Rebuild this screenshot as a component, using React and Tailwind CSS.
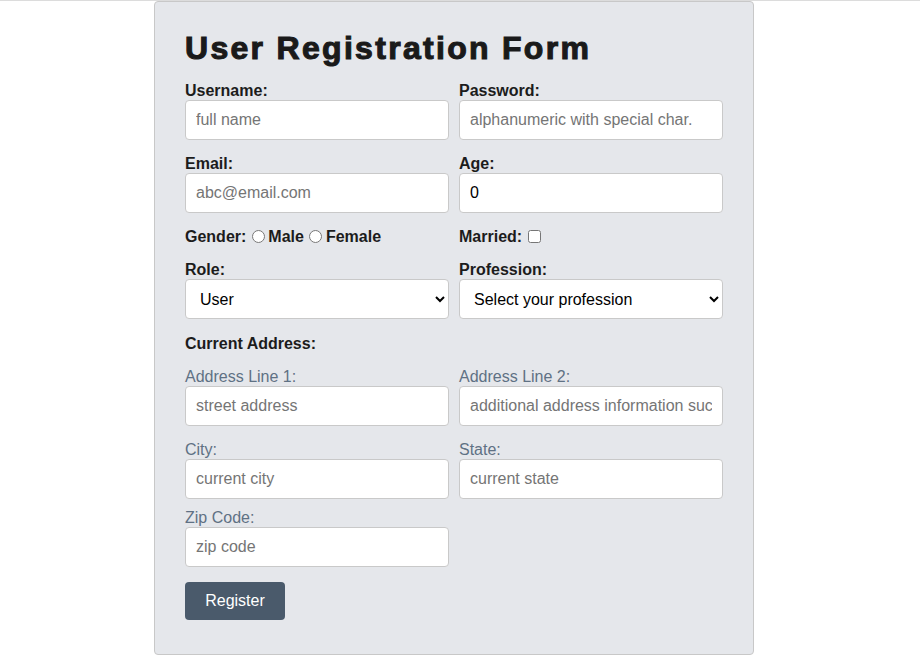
export default function App() {
  const font = { fontFamily: '"Liberation Sans", Arial, Helvetica, sans-serif' };
  const mainLabel = 'block text-[16px] leading-[19px] font-bold text-[#1c1c1c]';
  const subLabel = 'block text-[16px] leading-[19px] text-[#5f7184]';
  const input =
    'block h-10 w-full rounded-[4px] border border-[#c9c9c9] bg-white px-[10px] text-[16px] text-black placeholder:text-[#757575] outline-none';
  const select =
    'block h-10 w-full rounded-[4px] border border-[#c9c9c9] bg-white px-[10px] text-[16px] text-black outline-none';

  return (
    <div className="min-h-[663px] bg-white" style={font}>
      <div className="h-px w-full bg-[#dcdcdc]" />
      <div className="flex justify-center pr-[12px]">
        <div className="w-[600px] rounded-[4px] border border-[#c8c8c8] bg-[#e5e7eb] p-[30px]">
          <h1 className="mb-[17px] text-[32px] leading-8 font-bold tracking-[2.3px] text-[#1a1a1a] [-webkit-text-stroke:1.1px_#1a1a1a]">
            User Registration Form
          </h1>

          <form onSubmit={(e) => e.preventDefault()}>
            <div className="grid grid-cols-2 gap-x-[10px]">
              <div className="mb-[14px]">
                <label className={mainLabel}>Username:</label>
                <input type="text" placeholder="full name" className={input} />
              </div>
              <div className="mb-[14px]">
                <label className={mainLabel}>Password:</label>
                <input type="password" placeholder="alphanumeric with special char." className={input} />
              </div>

              <div className="mb-[14px]">
                <label className={mainLabel}>Email:</label>
                <input type="email" placeholder="abc@email.com" className={input} />
              </div>
              <div className="mb-[14px]">
                <label className={mainLabel}>Age:</label>
                <input type="number" defaultValue={0} className={input} />
              </div>

              <div className="mb-[14px] flex h-[19px] items-center text-[16px] leading-[19px] font-bold text-[#1c1c1c]">
                <span>Gender:</span>
                <input type="radio" name="gender" className="mx-[3px] ml-[6px] h-[13px] w-[13px]" />
                <span>Male</span>
                <input type="radio" name="gender" className="mx-[4px] ml-[5px] h-[13px] w-[13px]" />
                <span>Female</span>
              </div>
              <div className="mb-[14px] flex h-[19px] items-center text-[16px] leading-[19px] font-bold text-[#1c1c1c]">
                <span>Married:</span>
                <input type="checkbox" className="ml-[6px] h-[13px] w-[13px]" />
              </div>

              <div className="mb-[14px]">
                <label className={mainLabel}>Role:</label>
                <select className={select} defaultValue="user">
                  <option value="user">User</option>
                  <option value="admin">Admin</option>
                </select>
              </div>
              <div className="mb-[15px]">
                <label className={mainLabel}>Profession:</label>
                <select className={select} defaultValue="">
                  <option value="">Select your profession</option>
                  <option value="dev">Developer</option>
                  <option value="designer">Designer</option>
                </select>
              </div>
            </div>

            <div className="mb-[14px]">
              <span className={mainLabel}>Current Address:</span>
            </div>

            <div className="grid grid-cols-2 gap-x-[10px]">
              <div className="mb-[14px]">
                <label className={subLabel}>Address Line 1:</label>
                <input type="text" placeholder="street address" className={input} />
              </div>
              <div className="mb-[14px]">
                <label className={subLabel}>Address Line 2:</label>
                <input
                  type="text"
                  placeholder="additional address information such as apartment or suite number"
                  className={input}
                />
              </div>

              <div className="mb-[9px]">
                <label className={subLabel}>City:</label>
                <input type="text" placeholder="current city" className={input} />
              </div>
              <div className="mb-[9px]">
                <label className={subLabel}>State:</label>
                <input type="text" placeholder="current state" className={input} />
              </div>

              <div className="mb-[15px]">
                <label className={subLabel}>Zip Code:</label>
                <input type="text" placeholder="zip code" className={input} />
              </div>
            </div>

            <button
              type="submit"
              className="mb-[4px] block h-[38px] w-[100px] rounded-[4px] bg-[#4a5a6b] text-[16px] text-white"
            >
              Register
            </button>
          </form>
        </div>
      </div>
    </div>
  );
}
